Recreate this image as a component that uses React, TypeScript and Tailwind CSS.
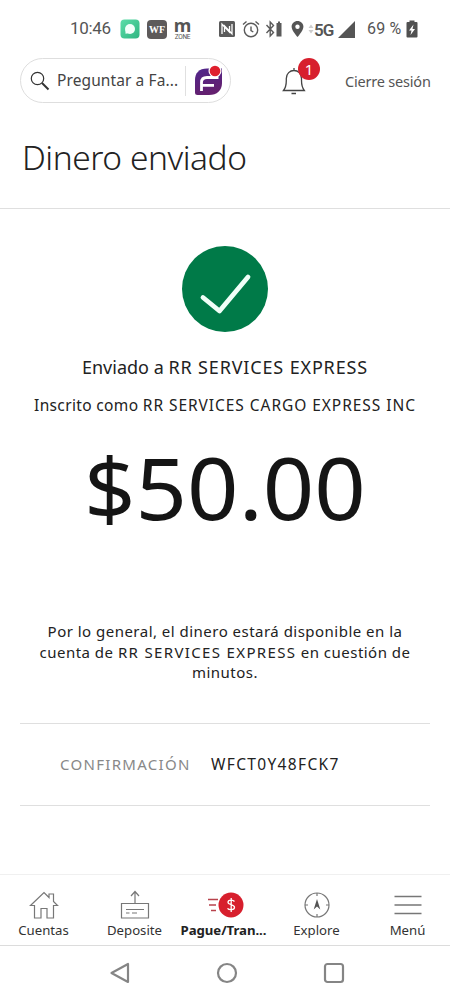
import React from 'react';

const StatusBar: React.FC = () => (
  <div className="flex h-[58px] items-center pl-[70px] text-[#555] font-['Roboto',sans-serif]">
    <span className="w-[50px] text-[17px] tracking-[-0.35px] whitespace-nowrap">10:46</span>
    <svg width="20" height="20" viewBox="0 0 20 20">
      <defs>
        <linearGradient id="chat" x1="0" y1="0" x2="1" y2="1">
          <stop offset="0" stopColor="#5ddda9" />
          <stop offset="1" stopColor="#2eb581" />
        </linearGradient>
      </defs>
      <rect x="0.5" y="0.5" width="19" height="19" rx="4" fill="url(#chat)" />
      <circle cx="10" cy="10" r="5" fill="#f2fffa" />
      <path d="M5.500 11v3.800l4-.8z" fill="#f2fffa" />
    </svg>
    <span className="ml-[7px] flex h-[19px] w-[20px] shrink-0 items-center justify-center rounded bg-[#5d5a5a] text-[10px] font-bold text-white font-['Liberation_Serif',serif]">WF</span>
    <span className="ml-[7px] flex w-[17px] flex-col items-center pt-[3px]">
      <span className="mt-[-3px] text-[18px] leading-[14px] font-bold font-['Noto_Sans',sans-serif]">m</span>
      <span className="mt-[2px] text-[6.500px] leading-[6px] tracking-[-0.300px]">ZONE</span>
    </span>
    <svg className="ml-[28px]" width="16" height="16" viewBox="0 0 16 16">
      <rect width="16" height="16" rx="1.500" fill="#5a5a5a" />
      <path d="M3 13V3.200l7.500 8V5M13 3v9.800L5.500 4.800V11" fill="none" stroke="#fff" strokeWidth="1.300" />
    </svg>
    <svg className="ml-[7px]" width="18" height="18" viewBox="0 0 18 18" fill="none" stroke="#5a5a5a" strokeWidth="1.400">
      <circle cx="9" cy="10" r="6.700" />
      <path d="M9 6.500V10.500l2.300 1.500M1 4.500L4.500 1.500M17 4.500L13.500 1.500" />
    </svg>
    <svg className="ml-[5px]" width="18" height="18" viewBox="0 0 18 18">
      <path d="M1.500 5l7 7.500-3.300 3.500V2l3.300 3.500-7 7.500" fill="none" stroke="#5a5a5a" strokeWidth="1.400" />
      <path d="M11.500 3h1.500V1.500h2V3h1.500v13.500h-5z" fill="#5a5a5a" />
    </svg>
    <svg className="ml-[8px]" width="13" height="18" viewBox="0 0 13 18">
      <path d="M6.500 1C3.200 1 .6 3.500.6 6.800c0 4 5.900 10.200 5.900 10.200s5.900-6.200 5.900-10.200C12.400 3.500 9.800 1 6.500 1z" fill="#555" />
      <circle cx="6.500" cy="6.700" r="2.200" fill="#fff" />
    </svg>
    <svg className="ml-[4px]" width="6" height="10" viewBox="0 0 6 10" fill="#ccc">
      <path d="M.5 4L3 .5 5.500 4zM.5 6L3 9.500 5.500 6z" />
    </svg>
    <span className="w-[22px] pt-[4px] text-[17px] font-semibold tracking-[-1px]">5G</span>
    <svg className="ml-[2px]" width="17" height="17" viewBox="0 0 17 17">
      <path d="M0 17L17 0v17z" fill="#555" />
    </svg>
    <span className="ml-[12px] w-[39px] text-[16px] tracking-[0.2px] whitespace-nowrap">69 %</span>
    <svg width="12" height="18" viewBox="0 0 12 18">
      <path d="M1.500 2H3.500V0.500h5V2h2q1 0 1 1v13.500q0 1-1 1h-9q-1 0-1-1V3q0-1 1-1z" fill="#505050" />
      <path d="M7.500 4.500L3 10.500h2.500L4.500 15 9 9H6.500z" fill="#fff" />
    </svg>
  </div>
);

const TopBar: React.FC = () => (
  <div className="flex h-[45px] items-center pl-[20px]">
    <div className="flex h-[45px] w-[211px] items-center rounded-full border border-[#dedede] pl-[9px]">
      <svg width="20" height="20" viewBox="0 0 20 20" fill="none" stroke="#333">
        <circle cx="7.500" cy="7.500" r="6.200" strokeWidth="1.200" />
        <path d="M12 12l6.500 6.500" strokeWidth="1.900" />
      </svg>
      <span className="ml-[7px] w-[128px] pt-[1px] text-[15.500px] tracking-[0.100px] whitespace-nowrap text-[#444]">Preguntar a Fa...</span>
      <span className="h-[30px] w-px bg-[#e0e0e0]" />
      <svg className="ml-[8px]" width="30" height="32" viewBox="0 0 30 32">
        <defs>
          <linearGradient id="fargo" x1="0" y1="0" x2="0.3" y2="1">
            <stop offset="0" stopColor="#50268c" />
            <stop offset="1" stopColor="#64206f" />
          </linearGradient>
        </defs>
        <path d="M13 3.500C5 3.500 1 8 1 15v12.500q0 2.500 2.500 2.500H15c8 0 13-4.500 13-12V3.500z" fill="url(#fargo)" />
        <path d="M24.500 12.500H13q-5.500 0-5.500 5V26M7.500 20.300h12.500" fill="none" stroke="#fff" strokeWidth="2.800" />
        <circle cx="21" cy="6" r="6.500" fill="#fff" />
        <circle cx="21" cy="6" r="5.300" fill="#df1f2d" />
      </svg>
    </div>
    <div className="relative ml-[51px] h-[45px] w-[40px]">
      <svg className="mt-[8px]" width="24" height="30" viewBox="0 0 24 30" fill="none" stroke="#444" strokeWidth="1.300">
        <path d="M1.500 24.500H22.300C20 21.500 19.500 18 19.500 14.500V12.500C19.500 7.500 16 4.500 12 4.500S4.300 7.500 4.300 12.500v2C4.300 18 4 21.500 1.500 24.500zM12 4.500V2M9.500 27.500h4.500" />
      </svg>
      <span className="absolute top-0 left-[16px] flex h-[22px] w-[22px] items-center justify-center rounded-full bg-[#d71f2d] text-[15px] text-white">1</span>
    </div>
    <span className="ml-[23px] pt-[2px] text-[14.500px] tracking-[-0.200px] whitespace-nowrap text-[#555]">Cierre sesión</span>
  </div>
);

const tabs = [
  {
    label: 'Cuentas',
    icon: (
      <svg width="30" height="30" viewBox="0 0 30 30" fill="none" stroke="#777" strokeWidth="1.200">
        <path d="M1.500 15.500L15 2.500l5 5V4h4.500v7.500l4 4H24.500V28H18v-9.500h-6V28H5.500V15.500z" />
      </svg>
    ),
  },
  {
    label: 'Deposite',
    icon: (
      <svg width="30" height="30" viewBox="0 0 30 30" fill="none" stroke="#777" strokeWidth="1.200">
        <path d="M1.500 13.500h27V28h-27zM15 13V2M11 6l4-4.500L19 6M6 19.500h18M6 23h3.500M12 23h5" />
      </svg>
    ),
  },
  {
    label: 'Pague/Tran...',
    active: true,
    icon: (
      <svg width="40" height="30" viewBox="0 0 40 30">
        <path d="M4 9.500h10M5 15h7M7 20.500h5" stroke="#b8434d" strokeWidth="1.300" />
        <circle cx="27" cy="15" r="12.500" fill="#d71f2d" />
        <path d="M30.500 11.500C29 9.600 24 9.500 24 12.300 24 15.200 30.500 14 30.500 17.300 30.500 20.300 25 20.300 23.500 18.300M27.200 8v14" fill="none" stroke="#fff" strokeWidth="1.300" />
      </svg>
    ),
  },
  {
    label: 'Explore',
    icon: (
      <svg width="30" height="30" viewBox="0 0 30 30" fill="none" stroke="#777" strokeWidth="1.200">
        <circle cx="15" cy="15" r="12" />
        <path d="M15 3v3M15 24v3M3 15h3M24 15h3" />
        <path d="M15 9l3.300 10.500L15 16.500l-3.300 3z" fill="#555" stroke="none" />
      </svg>
    ),
  },
  {
    label: 'Menú',
    icon: (
      <svg width="30" height="30" viewBox="0 0 30 30" fill="none" stroke="#777" strokeWidth="1.300">
        <path d="M1.500 6.500h27M1.500 15h27M1.500 23.500h27" />
      </svg>
    ),
  },
];

const TabBar: React.FC = () => (
  <div className="flex h-[72px] justify-center border-t border-b border-t-[#f0f0f0] border-b-[#dcdcdc] pt-[15px] pl-[1px]">
    {tabs.map(t => (
      <div key={t.label} className={`flex w-[91px] shrink-0 flex-col items-center ${t.active ? 'pr-[4px]' : ''}`}>
        {t.icon}
        <span className={`text-[13.200px] leading-[20px] whitespace-nowrap ${t.active ? 'font-bold text-[#222] tracking-[-0.050px]' : 'text-[#333]'}`}>{t.label}</span>
      </div>
    ))}
  </div>
);

const App: React.FC = () => {
  return (
    <div className="flex h-[1000px] w-[450px] flex-col overflow-hidden bg-white text-[#222] font-['Noto_Sans',sans-serif]">
      <StatusBar />
      <TopBar />
      <div className="flex h-[106px] items-center border-b border-[#dfdfdf] pt-[3px] pl-[22px]">
        <h1 className="text-[33.500px] font-light tracking-[-0.450px] whitespace-nowrap">Dinero enviado</h1>
      </div>

      <main className="flex flex-1 flex-col items-center px-[20px] pt-[37px]">
        <svg width="86" height="86" viewBox="0 0 86 86">
          <circle cx="43" cy="43" r="43" fill="#007a48" />
          <path d="M21 51.500L37.500 65 66 31" fill="none" stroke="#f0fff8" strokeWidth="4.800" strokeLinecap="round" strokeLinejoin="round" />
        </svg>
        <p className="mt-[22px] text-[18px] leading-[26px] whitespace-nowrap">
          Enviado a <span className="tracking-[0.850px]">RR SERVICES EXPRESS</span>
        </p>
        <p className="mt-[14px] text-[15.500px] leading-[22px] tracking-[0.350px] whitespace-nowrap">
          Inscrito como <span className="tracking-[0.950px]">RR SERVICES CARGO EXPRESS INC</span>
        </p>
        <p className="mt-[23px] scale-x-[1.060] text-[85px] leading-[96px] text-[#151515] whitespace-nowrap">$50.00</p>
        <p className="mt-[86px] text-center text-[15px] leading-[20.700px] tracking-[0.480px] whitespace-nowrap">
          Por lo general, el dinero estará disponible en la
          <br />
          cuenta de <span className="tracking-[1.350px]">RR SERVICES EXPRESS</span> en cuestión de
          <br />
          minutos.
        </p>
        <div className="mt-[40px] flex h-[83px] w-full items-center border-t border-b border-[#dfdfdf] pl-[40px] text-[15px]">
          <span className="w-[151px] tracking-[1.300px] text-[#888]">CONFIRMACIÓN</span>
          <span className="pt-[1px] text-[15.500px] tracking-[1.350px]">WFCT0Y48FCK7</span>
        </div>
      </main>

      <TabBar />
      <div className="flex h-[54px] items-center justify-center gap-[83.500px] pl-[3px]">
        <svg width="24" height="24" viewBox="0 0 24 24" fill="none" stroke="#858585" strokeWidth="2.200" strokeLinejoin="round">
          <path d="M21 3v18L4.500 12z" />
        </svg>
        <svg width="24" height="24" viewBox="0 0 24 24" fill="none" stroke="#858585" strokeWidth="2.200">
          <circle cx="12" cy="12" r="9" />
        </svg>
        <svg width="24" height="24" viewBox="0 0 24 24" fill="none" stroke="#858585" strokeWidth="2.200">
          <rect x="3" y="3" width="18" height="18" rx="2.500" />
        </svg>
      </div>
    </div>
  );
};

export default App;
